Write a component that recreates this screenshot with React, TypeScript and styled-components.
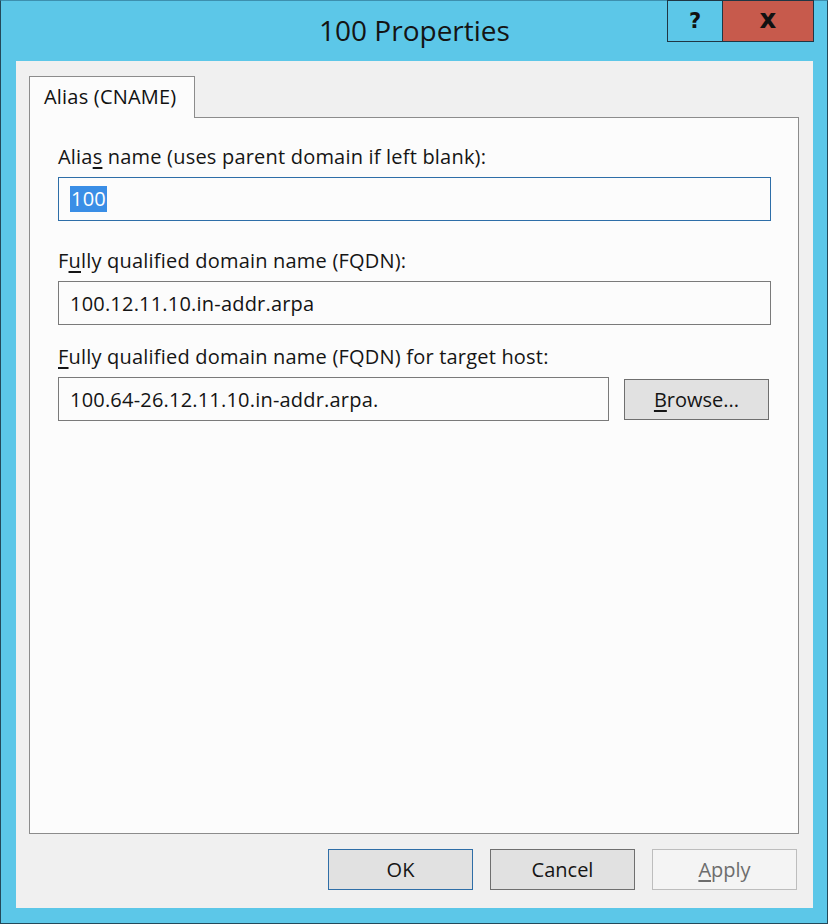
import styled, { createGlobalStyle } from "styled-components";

const Global = createGlobalStyle`
  html, body {
    margin: 0;
    padding: 0;
    background: #5cc7e8;
  }
  body {
    font-family: "Open Sans", "Noto Sans", sans-serif;
  }
`;

const Frame = styled.div`
  width: 828px;
  height: 924px;
  box-sizing: border-box;
  background: #5cc7e8; /* cyan window frame */
  border: 1px solid #23495a;
  border-top-color: #3d8fae;
  display: flex;
  flex-direction: column;
  padding: 0 14px 15px 15px;
`;

const TitleBar = styled.div`
  height: 60px;
  position: relative;
  display: flex;
  align-items: center;
  justify-content: center;
  flex-shrink: 0;
`;

const Title = styled.h1`
  margin: 0 0 2px 0;
  font-size: 28px;
  font-weight: 400;
  color: #141414;
`;

const Caption = styled.div`
  position: absolute;
  top: -1px;
  right: -1px;
  display: flex;
`;

const CaptionButton = styled.div<{ $close?: boolean }>`
  width: ${(p) => (p.$close ? "91px" : "56px")};
  height: 42px;
  box-sizing: border-box;
  border: 1px solid #1f3644;
  border-left-width: ${(p) => (p.$close ? "0" : "1px")};
  background: ${(p) => (p.$close ? "#c75a4c" : "#5cc7e8")};
  display: flex;
  align-items: center;
  justify-content: center;
  font-family: "DejaVu Sans", sans-serif;
  font-weight: 700;
  font-size: ${(p) => (p.$close ? "26px" : "21px")};
  line-height: 1;
  padding-bottom: ${(p) => (p.$close ? "4px" : "0")};
  color: #111;
`;

const Client = styled.div`
  flex: 1;
  background: #f0f0f0;
  display: flex;
  flex-direction: column;
  padding: 15px 14px 0 13px;
  box-sizing: border-box;
`;

const TabStrip = styled.div`
  display: flex;
  height: 41px;
  position: relative;
  z-index: 1;
`;

const Tab = styled.div`
  width: 166px;
  box-sizing: border-box;
  border: 1px solid #8c8c8c;
  border-bottom: none;
  background: #fcfcfc;
  height: 42px;
  padding: 6px 0 0 14px;
  font-size: 20px;
  letter-spacing: 0.2px;
  color: #111;
`;

const Panel = styled.div`
  height: 717px;
  box-sizing: border-box;
  border: 1px solid #8c8c8c;
  background: #fcfcfc;
  padding: 26px 27px 0 28px;
  display: flex;
  flex-direction: column;
`;

const Label = styled.div<{ $gap?: number }>`
  font-size: 20px;
  letter-spacing: 0.2px;
  color: #151515;
  margin-top: ${(p) => p.$gap ?? 0}px;
  margin-bottom: 7px;
  height: 26px;
  line-height: 26px;
  u {
    text-decoration: underline;
    text-underline-offset: 3px;
  }
`;

const Row = styled.div`
  display: flex;
  align-items: center;
  gap: 15px;
`;

const Field = styled.div<{ $focused?: boolean; $width?: string }>`
  height: 44px;
  width: ${(p) => p.$width ?? "auto"};
  flex: none;
  box-sizing: border-box;
  border: 1px solid ${(p) => (p.$focused ? "#2e6ea8" : "#7a7a7a")};
  background: #fcfcfc;
  display: flex;
  align-items: center;
  padding-left: 11px;
  font-size: 20px;
  letter-spacing: 0.2px;
  color: #141414;
`;

const Selected = styled.span`
  background: #3a8ee6;
  color: #fff;
  padding: 0 1px;
  line-height: 26px;
`;

const Button = styled.div<{ $variant?: "default" | "disabled" }>`
  width: 145px;
  height: 41px;
  box-sizing: border-box;
  display: flex;
  align-items: center;
  justify-content: center;
  font-size: 20px;
  background: ${(p) => (p.$variant === "disabled" ? "#f4f4f4" : "#e1e1e1")};
  color: ${(p) => (p.$variant === "disabled" ? "#6d6d6d" : "#151515")};
  border: 1px solid
    ${(p) =>
      p.$variant === "default"
        ? "#2f6ea7"
        : p.$variant === "disabled"
        ? "#bdbdbd"
        : "#6f6f6f"};
  u {
    text-underline-offset: 3px;
  }
`;

const Footer = styled.div`
  display: flex;
  justify-content: flex-end;
  gap: 17px;
  padding: 15px 2px 0 0;
`;

export default function App() {
  return (
    <>
      <Global />
      <Frame>
        <TitleBar>
          <Title>100 Properties</Title>
          <Caption>
            <CaptionButton>?</CaptionButton>
            <CaptionButton $close>x</CaptionButton>
          </Caption>
        </TitleBar>
        <Client>
          <TabStrip>
            <Tab>Alias (CNAME)</Tab>
          </TabStrip>
          <Panel>
            <Label>
              Alia<u>s</u> name (uses parent domain if left blank):
            </Label>
            <Field $focused>
              <Selected>100</Selected>
            </Field>
            <Label $gap={27}>
              F<u>u</u>lly qualified domain name (FQDN):
            </Label>
            <Field>100.12.11.10.in-addr.arpa</Field>
            <Label $gap={19}>
              <u>F</u>ully qualified domain name (FQDN) for target host:
            </Label>
            <Row>
              <Field $width="551px">100.64-26.12.11.10.in-addr.arpa.</Field>
              <Button>
                <u>B</u>rowse...
              </Button>
            </Row>
          </Panel>
          <Footer>
            <Button $variant="default">OK</Button>
            <Button>Cancel</Button>
            <Button $variant="disabled">
              <u>A</u>pply
            </Button>
          </Footer>
        </Client>
      </Frame>
    </>
  );
}
